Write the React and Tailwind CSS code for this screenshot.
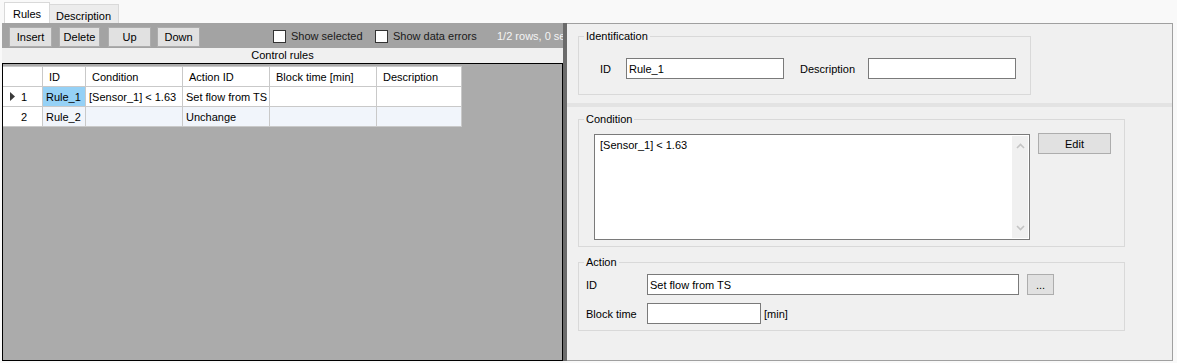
import React from "react";

const Btn = ({ label, className }) => (
    <div className={`h-[20px] shrink-0 bg-[#e1e1e1] border border-[#adadad] flex items-center justify-center ${className}`}>{label}</div>
);

const Checkbox = ({ label, className }) => (
    <div className={`flex items-center shrink-0 h-[20px] ${className}`}>
        <div className="w-[13px] h-[13px] bg-white border border-[#333333]" />
        <span className="ml-[5px] text-[#1a1a1a]">{label}</span>
    </div>
);

const Field = ({ value, className }) => (
    <div className={`h-[21px] bg-white border border-[#7a7a7a] pl-[2px] flex items-center whitespace-nowrap overflow-hidden ${className}`}>{value}</div>
);

const Chevron = ({ up }) => (
    <svg width="9" height="6" viewBox="0 0 9 6">
        <path d={up ? "M1 5 L4.5 1.5 L8 5" : "M1 1 L4.5 4.5 L8 1"} fill="none" stroke="#c4c4c4" strokeWidth="1.6" />
    </svg>
);

const RowArrow = () => (
    <svg width="5" height="9" viewBox="0 0 5 9">
        <path d="M0 0 L5 4.5 L0 9 Z" fill="#3a3a3a" />
    </svg>
);

const cols = "grid grid-cols-[40px_43px_97px_87px_107px_85px] w-fit";
const headCell = "h-[21px] bg-white border-r border-b border-t border-[#c9c9c9] pl-[6px] flex items-center whitespace-nowrap";
const cell = "h-[20px] border-r border-b border-[#c9c9c9] pl-[3px] flex items-center whitespace-nowrap overflow-hidden";

const rows = [
    { n: "1", id: "Rule_1", cond: "[Sensor_1] < 1.63", action: "Set flow from TS", current: true },
    { n: "2", id: "Rule_2", cond: "", action: "Unchange", current: false },
];

export default function App() {
    return (
        <div className="w-[1177px] h-[363px] bg-[#f9f9f9] text-black text-[11px] leading-[14px] font-['Liberation_Sans',Arial,sans-serif] overflow-hidden">
            {/* tabs */}
            <div className="h-[23px] flex items-end pl-[4px]">
                <div className="h-[21px] w-[46px] bg-white border border-b-0 border-[#d9d9d9] pl-[8px] pt-[4px]">Rules</div>
                <div className="h-[19px] w-[69px] bg-[#ececec] border border-l-0 border-b-0 border-[#d9d9d9] pl-[6px] pt-[4px]">Description</div>
            </div>

            <div className="h-[338px] flex pl-[2px]">
                {/* left panel */}
                <div className="w-[561px] flex flex-col">
                    <div className="h-[25px] bg-[#a3a3a3] flex items-start pt-[4px] whitespace-nowrap overflow-hidden">
                        <Btn label="Insert" className="w-[43px] ml-[7px]" />
                        <Btn label="Delete" className="w-[41px] ml-[7px]" />
                        <Btn label="Up" className="w-[43px] ml-[8px]" />
                        <Btn label="Down" className="w-[43px] ml-[6px]" />
                        <Checkbox label="Show selected" className="w-[102px] ml-[73px] -mt-[1px]" />
                        <Checkbox label="Show data errors" className="w-[122px] -mt-[1px]" />
                        <span className="shrink-0 text-[#f4f4f4] leading-[18px]">1/2 rows, 0 selected</span>
                    </div>
                    <div className="h-[15px] bg-[#f0f0f0] text-center leading-[15px]">Control rules</div>
                    <div className="flex-1 bg-[#ababab] border border-black pt-[2px]">
                        <div className={cols}>
                            <div className={headCell} />
                            <div className={headCell}>ID</div>
                            <div className={headCell}>Condition</div>
                            <div className={headCell}>Action ID</div>
                            <div className={headCell}>Block time [min]</div>
                            <div className={headCell}>Description</div>
                            {rows.map((r) => {
                                const bg = r.current ? "bg-white" : "bg-[#f1f5fb]";
                                return (
                                    <React.Fragment key={r.n}>
                                        <div className={`${cell} bg-white pl-[7px]`}>
                                            <span className="w-[11px] flex items-center">{r.current && <RowArrow />}</span>
                                            <span>{r.n}</span>
                                        </div>
                                        <div className={`${cell} ${r.current ? "bg-[#95d1f6]" : bg}`}>{r.id}</div>
                                        <div className={`${cell} ${bg}`}>{r.cond}</div>
                                        <div className={`${cell} ${bg}`}>{r.action}</div>
                                        <div className={`${cell} ${bg}`} />
                                        <div className={`${cell} ${bg}`} />
                                    </React.Fragment>
                                );
                            })}
                        </div>
                    </div>
                </div>

                {/* splitter */}
                <div className="w-[4px] bg-[#6b6b6b]" />

                {/* right panel */}
                <div className="w-[606px] bg-[#f0f0f0] border-t border-r border-b border-[#a0a0a0] flex flex-col">
                    <fieldset className="mt-[5px] ml-[11px] w-[453px] border border-[#d9d9d9] px-[5px] pb-[15px]">
                        <legend className="px-[2px] leading-[14px]">Identification</legend>
                        <div className="flex items-center mt-[15px]">
                            <span className="w-[26px] ml-[16px]">ID</span>
                            <Field value="Rule_1" className="w-[158px]" />
                            <span className="w-[68px] ml-[16px]">Description</span>
                            <Field value="" className="w-[148px]" />
                        </div>
                    </fieldset>

                    <div className="mt-[8px] h-[4px] bg-[#e3e3e3]" />

                    <fieldset className="mt-[5px] ml-[11px] w-[547px] border border-[#d9d9d9] px-[5px] pb-[6px]">
                        <legend className="px-[2px] leading-[14px]">Condition</legend>
                        <div className="flex items-start mt-[8px] ml-[10px]">
                            <div className="w-[436px] h-[106px] bg-white border border-[#7a7a7a] flex p-[1px]">
                                <div className="flex-1 pl-[4px] pt-[2px]">[Sensor_1] &lt; 1.63</div>
                                <div className="w-[16px] bg-[#f0f0f0] flex flex-col items-center justify-between py-[7px]">
                                    <Chevron up />
                                    <Chevron />
                                </div>
                            </div>
                            <Btn label="Edit" className="w-[73px] h-[21px] ml-[8px] -mt-[1px]" />
                        </div>
                    </fieldset>

                    <fieldset className="mt-[8px] ml-[11px] w-[547px] border border-[#d9d9d9] px-[5px] pb-[6px]">
                        <legend className="px-[2px] leading-[14px]">Action</legend>
                        <div className="flex items-center mt-[5px] ml-[2px]">
                            <span className="w-[61px]">ID</span>
                            <Field value="Set flow from TS" className="w-[372px]" />
                            <Btn label="..." className="w-[27px] h-[21px] ml-[8px]" />
                        </div>
                        <div className="flex items-center mt-[8px] ml-[2px]">
                            <span className="w-[61px]">Block time</span>
                            <Field value="" className="w-[114px]" />
                            <span className="ml-[3px]">[min]</span>
                        </div>
                    </fieldset>
                </div>
            </div>
        </div>
    );
}
